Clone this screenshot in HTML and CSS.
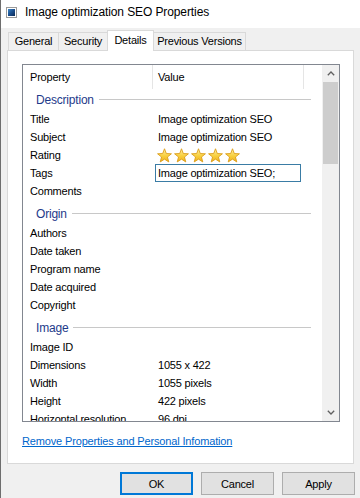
FILE: index.html
```html
<!DOCTYPE html>
<html lang="en">
<head>
    <meta charset="UTF-8">
    <title>Image optimization SEO Properties</title>
    <link rel="stylesheet" href="styles.css">
</head>
<body>
    <div class="window">
        <div class="titlebar">
            <svg class="app-icon" width="11" height="11" viewBox="0 0 11 11">
                <defs>
                    <linearGradient id="pic" x1="0" y1="0" x2="1" y2="1">
                        <stop offset="0" stop-color="#3a86c8"/>
                        <stop offset="0.5" stop-color="#1b4f8e"/>
                        <stop offset="1" stop-color="#0d2a55"/>
                    </linearGradient>
                </defs>
                <rect x="0.5" y="0.5" width="10" height="10" fill="#fff" stroke="#9a9a9a"/>
                <rect x="2" y="2" width="7" height="7" fill="url(#pic)"/>
            </svg>
            <span class="title">Image optimization SEO Properties</span>
        </div>

        <div class="tabs">
            <div class="tab general">General</div>
            <div class="tab security">Security</div>
            <div class="tab active">Details</div>
            <div class="tab versions">Previous Versions</div>
        </div>

        <div class="panel">
            <div class="listbox">
                <div class="list">
                    <div class="list-head">
                        <div class="head-cell name-col">Property</div>
                        <div class="head-cell value-col">Value</div>
                        <div class="head-cell rest-col"></div>
                    </div>

                    <div class="group first"><span>Description</span><i class="group-line"></i></div>
                    <div class="row"><span class="name">Title</span><span class="value">Image optimization SEO</span></div>
                    <div class="row"><span class="name">Subject</span><span class="value">Image optimization SEO</span></div>
                    <div class="row">
                        <span class="name">Rating</span>
                        <span class="value stars">
                            <svg class="star" viewBox="0 0 14 14"><use href="#star"/></svg>
                            <svg class="star" viewBox="0 0 14 14"><use href="#star"/></svg>
                            <svg class="star" viewBox="0 0 14 14"><use href="#star"/></svg>
                            <svg class="star" viewBox="0 0 14 14"><use href="#star"/></svg>
                            <svg class="star" viewBox="0 0 14 14"><use href="#star"/></svg>
                        </span>
                    </div>
                    <div class="row"><span class="name">Tags</span><span class="value"><span class="tag-input">Image optimization SEO;</span></span></div>
                    <div class="row"><span class="name">Comments</span><span class="value"></span></div>

                    <div class="group"><span>Origin</span><i class="group-line"></i></div>
                    <div class="row"><span class="name">Authors</span><span class="value"></span></div>
                    <div class="row"><span class="name">Date taken</span><span class="value"></span></div>
                    <div class="row"><span class="name">Program name</span><span class="value"></span></div>
                    <div class="row"><span class="name">Date acquired</span><span class="value"></span></div>
                    <div class="row"><span class="name">Copyright</span><span class="value"></span></div>

                    <div class="group"><span>Image</span><i class="group-line"></i></div>
                    <div class="row"><span class="name">Image ID</span><span class="value"></span></div>
                    <div class="row"><span class="name">Dimensions</span><span class="value">1055 x 422</span></div>
                    <div class="row"><span class="name">Width</span><span class="value">1055 pixels</span></div>
                    <div class="row"><span class="name">Height</span><span class="value">422 pixels</span></div>
                    <div class="row"><span class="name">Horizontal resolution</span><span class="value">96 dpi</span></div>
                </div>

                <div class="scrollbar">
                    <div class="scroll-btn">
                        <svg width="8" height="5" viewBox="0 0 8 5"><path d="M0.8 4.2 L4 1 L7.2 4.2" fill="none" stroke="#606060" stroke-width="1.3"/></svg>
                    </div>
                    <div class="scroll-track"><div class="scroll-thumb"></div></div>
                    <div class="scroll-btn">
                        <svg width="8" height="5" viewBox="0 0 8 5"><path d="M0.8 0.8 L4 4 L7.2 0.8" fill="none" stroke="#606060" stroke-width="1.3"/></svg>
                    </div>
                </div>
            </div>

            <a class="remove-link" href="#">Remove Properties and Personal Infomation</a>
        </div>

        <div class="buttons">
            <button class="btn default">OK</button>
            <button class="btn">Cancel</button>
            <button class="btn">Apply</button>
        </div>
    </div>

    <!-- shared star shape for the rating -->
    <svg width="0" height="0" class="defs">
        <defs>
            <linearGradient id="gold" x1="0" y1="0" x2="0" y2="1">
                <stop offset="0" stop-color="#fff0a8"/>
                <stop offset="0.55" stop-color="#f8cf3c"/>
                <stop offset="1" stop-color="#f0b020"/>
            </linearGradient>
            <symbol id="star" viewBox="0 0 14 14">
                <polygon points="7,0.7 8.7,5.15 13.47,5.4 9.76,8.4 11,13 7,10.4 3,13 4.24,8.4 0.53,5.4 5.3,5.15"
                         fill="url(#gold)" stroke="#d99a14" stroke-width="0.8" stroke-linejoin="round"/>
            </symbol>
        </defs>
    </svg>
</body>
</html>
```

FILE: styles.css
```css
body {
    margin: 0;
    background: #f0f0f0;
    font-family: "Liberation Sans", Arial, sans-serif;
    font-size: 11px;
    letter-spacing: -0.2px;
    color: #000;
}
.window {
    width: 360px;
    height: 498px;
    box-sizing: border-box;
    border-left: 1px solid #6e6e6e;
    overflow: hidden;
}
.titlebar {
    height: 28px;
    background: #fff;
    display: flex;
    align-items: center;
    padding-left: 5px;
    padding-bottom: 4px;
    box-sizing: border-box;
}
.app-icon {
    flex: none;
}
.title {
    margin-left: 8px;
    font-size: 12px;
    letter-spacing: -0.1px;
}
.tabs {
    display: flex;
    align-items: flex-end;
    height: 22px;
    padding-left: 7px;
}
.tab {
    height: 18px;
    line-height: 17px;
    box-sizing: border-box;
    text-align: center;
    white-space: nowrap;
    border: 1px solid #d9d9d9;
    border-bottom: none;
    margin-right: -1px;
    background: #f0f0f0;
}
.tab.general { width: 51px; }
.tab.security { width: 50px; }
.tab.versions { width: 93px; }
.tab.active {
    width: 47px;
    height: 21px;
    line-height: 18px;
    background: #fff;
    position: relative;
    z-index: 1;
    margin-bottom: -1px;
}
.panel {
    margin: 0 6px;
    height: 414px;
    box-sizing: border-box;
    background: #fff;
    border: 1px solid #d9d9d9;
    padding: 13px 13px 0 14px;
}
.listbox {
    height: 358px;
    box-sizing: border-box;
    border: 1px solid #828790;
    display: flex;
    overflow: hidden;
}
.list {
    flex: 1;
    overflow: hidden;
}
.list-head {
    display: flex;
    height: 24px;
}
.head-cell {
    line-height: 24px;
    height: 24px;
    box-sizing: border-box;
}
.name-col {
    width: 130px;
    padding-left: 7px;
    border-right: 1px solid #e5e5e5;
}
.value-col {
    width: 151px;
    padding-left: 5px;
    border-right: 1px solid #e5e5e5;
}
.rest-col {
    flex: 1;
}
.group {
    display: flex;
    align-items: center;
    height: 21px;
    margin-top: 3px;
    padding-left: 13px;
    padding-right: 11px;
    color: #1e3a8a;
    font-size: 12px;
}
.group.first {
    margin-top: 0;
}
.group-line {
    flex: 1;
    height: 1px;
    margin-left: 5px;
    background: #c8c8c8;
}
.row {
    display: flex;
    height: 18px;
    line-height: 18px;
}
.name {
    width: 129px;
    padding-left: 7px;
    box-sizing: border-box;
    white-space: nowrap;
}
.value {
    padding-left: 6px;
    white-space: nowrap;
}
.stars {
    display: flex;
    align-items: center;
    gap: 2px;
    padding-left: 5px;
}
.star {
    width: 15px;
    height: 15px;
}
.tag-input {
    display: inline-block;
    margin-left: -3px;
    width: 146px;
    height: 18px;
    line-height: 16px;
    box-sizing: border-box;
    border: 1px solid #3a7ca5;
    padding-left: 2px;
}
.scrollbar {
    width: 17px;
    background: #f0f0f0;
    display: flex;
    flex-direction: column;
}
.scroll-btn {
    height: 17px;
    display: flex;
    align-items: center;
    justify-content: center;
}
.scroll-track {
    flex: 1;
}
.scroll-thumb {
    margin: 0 1px 0 1px;
    height: 82px;
    background: #cdcdcd;
}
.remove-link {
    display: block;
    margin-top: 12px;
    color: #0066cc;
    text-decoration: underline;
    line-height: 14px;
    letter-spacing: -0.15px;
}
.buttons {
    display: flex;
    justify-content: flex-end;
    gap: 8px;
    padding-right: 5px;
    margin-top: 8px;
}
.btn {
    width: 73px;
    height: 23px;
    box-sizing: border-box;
    background: #e1e1e1;
    border: 1px solid #adadad;
    font-family: "Liberation Sans", Arial, sans-serif;
    font-size: 11px;
    letter-spacing: -0.2px;
    color: #000;
    padding: 0;
}
.btn.default {
    border: 2px solid #0078d7;
}
.defs {
    position: absolute;
}
```
